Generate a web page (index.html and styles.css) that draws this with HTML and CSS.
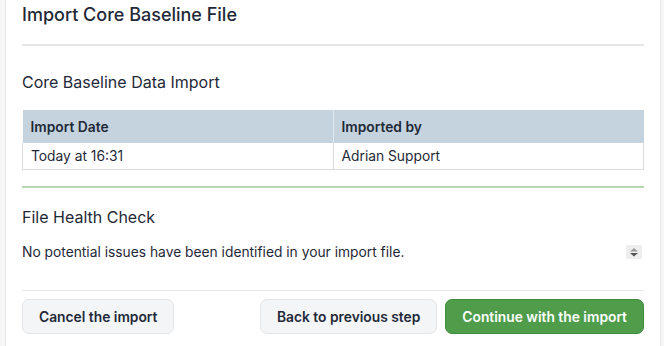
FILE: index.html
```html
<!DOCTYPE html>
<html lang="en">
<head>
  <meta charset="UTF-8">
  <meta name="viewport" content="width=device-width, initial-scale=1.0">
  <title>Import Core Baseline File</title>
  <link rel="stylesheet" href="styles.css">
</head>
<body>
  <div class="panel">
    <!-- Header -->
    <h1 class="panel-title">Import Core Baseline File</h1>

    <!-- Import details -->
    <section class="section">
      <h2 class="section-title">Core Baseline Data Import</h2>
      <table class="import-table">
        <thead>
          <tr>
            <th>Import Date</th>
            <th>Imported by</th>
          </tr>
        </thead>
        <tbody>
          <tr>
            <td>Today at 16:31</td>
            <td>Adrian Support</td>
          </tr>
        </tbody>
      </table>
    </section>

    <!-- Health check -->
    <section class="section health">
      <h2 class="section-title">File Health Check</h2>
      <div class="health-row">
        <p>No potential issues have been identified in your import file.</p>
        <span class="spinner">
          <svg width="16" height="14" viewBox="0 0 16 14">
            <polygon points="8,3 12,6.5 4,6.5" fill="#9a9a9a"/>
            <polygon points="4,8 12,8 8,11.5" fill="#555"/>
          </svg>
        </span>
      </div>
    </section>

    <!-- Actions -->
    <div class="actions">
      <button class="btn">Cancel the import</button>
      <div class="actions-right">
        <button class="btn">Back to previous step</button>
        <button class="btn btn-primary">Continue with the import</button>
      </div>
    </div>
  </div>
</body>
</html>
```

FILE: styles.css
```css
body {
  margin: 0;
  background-color: #f6f6f6;
  font-family: Inter, "Noto Sans", Arial, sans-serif;
  color: #1f2937;
}

.panel {
  margin-left: 5px;
  width: 622px;
  min-height: 346px;
  padding: 0 16px;
  background-color: #fff;
  border-left: 1px solid #e8e8e8;
  border-right: 1px solid #e8e8e8;
}

.panel-title {
  margin: 0;
  padding: 3px 0 17px;
  font-size: 18px;
  font-weight: 500;
  line-height: 24px;
  border-bottom: 2px solid #e6e6e6;
}

.section-title {
  margin: 0;
  font-size: 16px;
  font-weight: 400;
  line-height: 22px;
}

.section {
  padding-top: 25px;
}

.section .section-title {
  margin-bottom: 17px;
}

.import-table {
  width: 100%;
  border-collapse: collapse;
  font-size: 13.8px;
  table-layout: fixed;
}

.import-table th {
  background-color: #c5d3de;
  text-align: left;
  font-weight: 600;
  height: 33px;
  padding: 0 8px;
  border-left: 1px solid #dfe6ec;
}

.import-table th:first-child {
  border-left: none;
}

.import-table td {
  height: 26px;
  padding: 0 8px;
  border: 1px solid #dcdcdc;
  border-top: none;
}

.import-table th:first-child,
.import-table td:first-child {
  width: 294px;
}

.health {
  margin-top: 16px;
  padding-top: 18px;
  border-top: 2px solid #b7d7b2;
}

.health .section-title {
  margin-bottom: 14px;
}

.health-row {
  display: flex;
  align-items: center;
  justify-content: space-between;
  padding-bottom: 28px;
  border-bottom: 1px solid #e6e6e6;
}

.health-row p {
  margin: 0;
  font-size: 13.8px;
  line-height: 20px;
}

.spinner {
  display: flex;
  background-color: #eeeeee;
  margin-right: 2px;
}

.actions {
  display: flex;
  justify-content: space-between;
  padding-top: 8px;
}

.actions-right {
  display: flex;
  gap: 8px;
}

.btn {
  height: 35px;
  padding: 0 16px;
  font-family: inherit;
  font-size: 13.8px;
  font-weight: 600;
  color: #1f2937;
  background-color: #f4f5f7;
  border: 1px solid #e3e5e8;
  border-radius: 7px;
  cursor: pointer;
}

.btn-primary {
  background-color: #4f9d4b;
  border-color: #3f8a3c;
  color: #fff;
}
```
